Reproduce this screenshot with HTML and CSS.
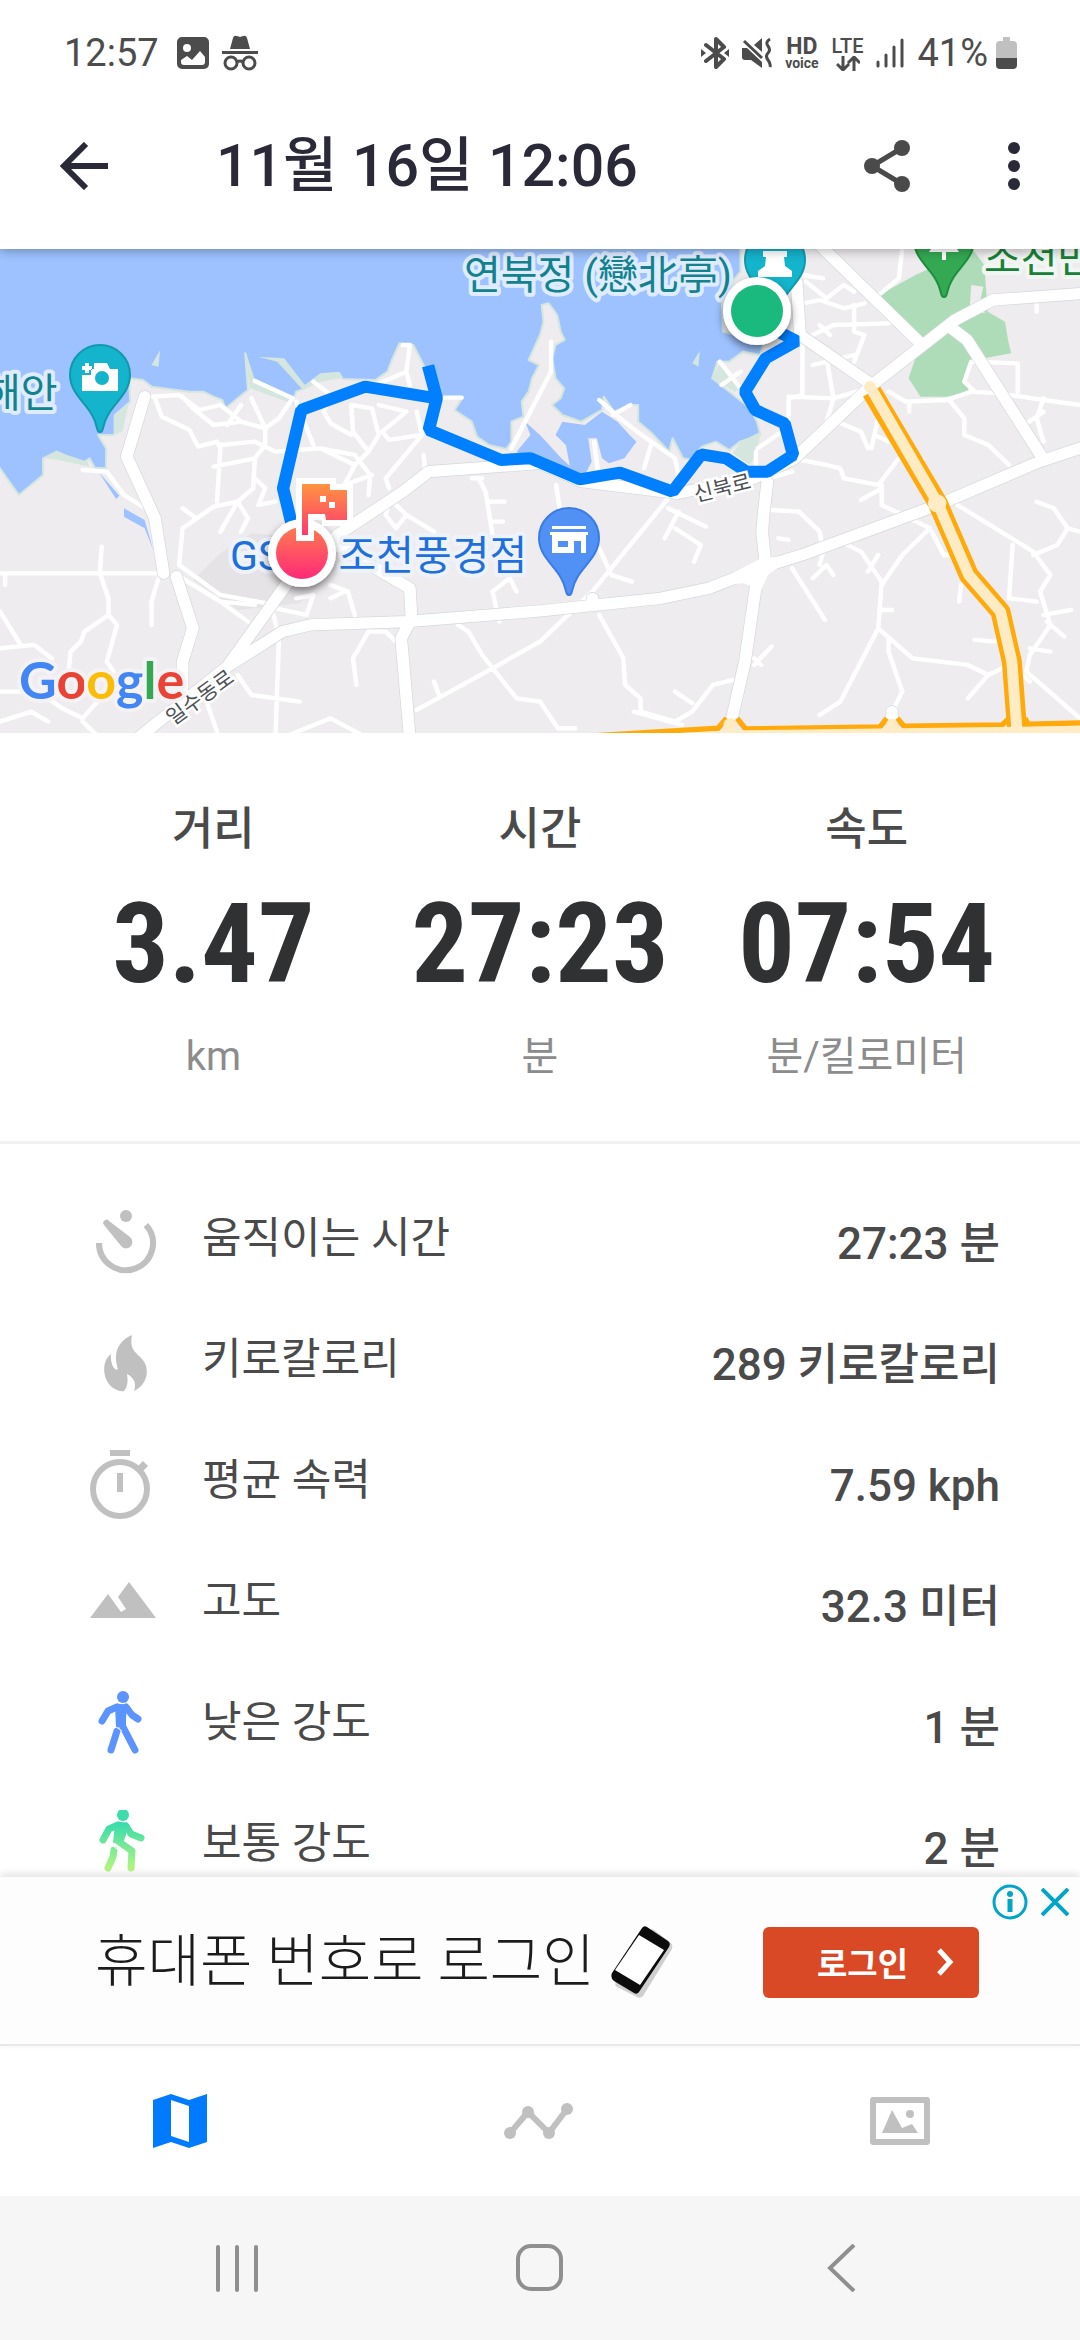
FILE: index.html
```html
<!DOCTYPE html>
<html lang="ko">
<head>
<meta charset="utf-8">
<meta name="viewport" content="width=device-width, initial-scale=1">
<title>11월 16일 12:06</title>
<link rel="stylesheet" href="styles.css">
</head>
<body>
<div class="app">
  <div class="status">
    <div class="status-group">
      <span class="status-text">12:57</span>
      <svg class="s-photo" viewBox="0 0 32 32" width="32" height="32"><path fill="#4c4c4c" fill-rule="evenodd" d="M5 0h22a5 5 0 0 1 5 5v22a5 5 0 0 1-5 5H5a5 5 0 0 1-5-5V5a5 5 0 0 1 5-5zM10 7a4 4 0 1 0 0 8 4 4 0 0 0 0-8zM4 25c0 2 1 3 3 3h18c2 0 3-1 3-3v-5l-5-6-8 9-5-4-6 4z"/></svg>
      <svg viewBox="0 0 36 36" width="36" height="36"><g fill="#4c4c4c"><path d="M8 14l3-11q1-3 4-2l3 1 3-1q3-1 4 2l3 11z"/><path d="M0 16h36v3H0z"/></g><g fill="none" stroke="#4c4c4c" stroke-width="3"><circle cx="9" cy="28" r="6"/><circle cx="27" cy="28" r="6"/><path d="M15 27q3-2 6 0"/></g></svg>
    </div>
    <div class="status-group">
      <svg viewBox="0 0 28 32" width="28" height="32"><path fill="none" stroke="#4c4c4c" stroke-width="4" stroke-linejoin="round" stroke-linecap="round" d="M5 8l18 14-8 8V2l8 8L5 24"/><path fill="#4c4c4c" d="M0 12l5 4-5 4zM28 12l-5 4 5 4z"/></svg>
      <svg class="s-mute" viewBox="0 0 30 32" width="30" height="32"><path fill="#4c4c4c" d="M0 11h5l15 14v6L9 23H3q-3 0-3-3zM20 1v14l-8-7z"/><path fill="none" stroke="#4c4c4c" stroke-width="3" d="M2 4l18 17M28 2q-5 3-2 7t0 7 0 7 2 7"/></svg>
      <span class="s-stack"><b class="s-hd">HD</b><b class="s-voice">voice</b></span>
      <span class="s-stack"><b class="s-lte">LTE</b><svg viewBox="0 0 24 15" width="24" height="15"><path fill="none" stroke="#4c4c4c" stroke-width="3" d="M7 0v13M1 8l6 6 6-6M18 15V2M12 7l6-6 6 6"/></svg></span>
      <svg class="s-bars" viewBox="0 0 28 30" width="28" height="30"><path stroke="#4c4c4c" stroke-width="3" stroke-linecap="round" d="M2 24v4M10 17v11M18 9v19M26 2v26"/></svg>
      <span class="status-text s-pct">41%</span>
      <svg viewBox="0 0 21 32" width="21" height="32"><path fill="#c0c0c0" d="M7 0h7v4h3q4 0 4 4v13H0V8q0-4 4-4h3z"/><path fill="#4c4c4c" d="M0 21h21v7q0 4-4 4H4q-4 0-4-4z"/></svg>
    </div>
  </div>

  <header class="bar">
    <button class="icon-btn" aria-label="뒤로"><svg viewBox="0 0 48 48" width="48" height="48"><path fill="none" stroke="#2a2937" stroke-width="6" d="M48 24H4M26 2L4 24l22 22"/></svg></button>
    <h1 class="title">11월 16일 12:06</h1>
    <button class="icon-btn share" aria-label="공유"><svg viewBox="0 0 46 52" width="46" height="52"><path fill="none" stroke="#4a4a4a" stroke-width="5" d="M38 8L8 26l30 18"/><g fill="#4a4a4a"><circle cx="38" cy="8" r="8"/><circle cx="8" cy="26" r="8"/><circle cx="38" cy="44" r="8"/></g></svg></button>
    <button class="icon-btn" aria-label="더보기"><svg viewBox="0 0 14 50" width="14" height="50"><g fill="#2a2937"><circle cx="7" cy="7" r="6"/><circle cx="7" cy="25" r="6"/><circle cx="7" cy="43" r="6"/></g></svg></button>
  </header>

  <svg class="map" viewBox="0 0 1080 484" preserveAspectRatio="xMidYMid slice" role="img" aria-label="지도">
    <defs>
      <linearGradient id="hot" gradientUnits="userSpaceOnUse" x1="0" y1="235" x2="0" y2="290"><stop offset="0" stop-color="#ff9440"/><stop offset="1" stop-color="#ff3074"/></linearGradient>
      <linearGradient id="ball" x1="0" y1="0" x2="0" y2="1"><stop offset="0" stop-color="#ff7a50"/><stop offset="1" stop-color="#ff2a78"/></linearGradient>
      <filter id="drop" x="-50%" y="-50%" width="200%" height="200%"><feDropShadow dx="0" dy="4" stdDeviation="4" flood-color="#000" flood-opacity=".5"/></filter>
      <path id="pin" d="M0 57C-4 57-2 50-8 40C-14 28-30 18-30 0A30 30 0 0 1 30 0C30 18 14 28 8 40C2 50 4 57 0 57Z"/>
    </defs>
    <rect width="1080" height="484" fill="#efecef"/>
    <g transform="translate(0 -4) scale(.3444 .3333)" stroke-linejoin="round">
      <path fill="#e6e3e6" d="M640 925l90-60 250 20 20 60-130 130-180 20-130-90z"/>
      <path fill="#9dc2ff" stroke="#d4e6dd" stroke-width="6" d="M-20 -20V640L20 700 55 750 125 690 125 640 165 620 240 655 260 640 275 668 308 670 308 610 285 570 330 570 350 545 335 510 378 470 375 400 415 405 440 425 550 440 590 440 620 455 645 465 655 490 690 460 720 435 712 325 735 400 850 470 860 440 885 430 930 395 985 385 995 402 1090 405 1125 380 1140 340 1160 295 1200 300 1225 350 1250 400 1285 460 1345 455 1320 495 1370 530 1385 575 1420 600 1470 612 1485 590 1485 530 1520 515 1515 470 1535 440 1545 400 1565 360 1535 345 1568 270 1578 230 1573 180 1593 175 1618 210 1628 260 1640 285 1613 300 1603 340 1613 400 1638 430 1628 460 1603 480 1633 510 1688 530 1748 495 1753 455 1783 500 1828 480 1853 480 1853 530 1888 560 1943 620 1953 580 1983 640 2008 645 2038 605 2078 590 2118 615 2148 590 2208 570 2198 530 2178 490 2118 440 2068 400 2083 350 2118 350 2158 320 2208 330 2218 290 2100 260 2095 150 2150 80V-20Z"/>
      <path fill="#9dc2ff" d="M1525 530L1568 570 1630 640 1700 705 1540 645 1500 620 1540 570ZM1613 570L1633 530 1698 540 1748 500 1793 530 1828 570 1848 590 1813 640 1768 655 1748 640 1733 580 1708 580 1718 650 1698 690 1658 680 1643 600ZM287 682l60 70-10 10zM360 790l60 35 25 90-25-65-60-35z"/>
      <g fill="#d4e6dd"><path d="M712 325l28 80 110 55 10 20-135-50zM750 335l75 5 60 80 45-35 55-5 5 20-60 10-50 25-75-85zM130 640l35-20 90 30 5 15-90-20zM440 360l25-45-5 50zM2150 590l58-30-10 60-20 40-50-35zM2068 400l25-50 60 80-20 10zM330 570l0-60 45-40-20 90zM2010 355l22-38-4 48z"/></g>
      <path fill="#aedcb8" d="M2553 150L2658 90 2823 12 2858 60 2868 200 2918 230 2928 290 2936 325 2858 340 2818 350 2803 400 2813 440 2748 455 2673 455 2638 400 2658 340 2690 310 2658 290 2618 230Z"/>
      <path fill="#efecef" d="M2820 120l35 5-10 50 15 30-45-5z"/>
      <g fill="none" stroke="#fff" stroke-width="13" stroke-linecap="round">
        <path d="M440 455L520 450 580 495 640 480 700 530 770 550 810 520 850 460 740 408M450 460L470 515 550 555 575 605 630 590 640 610 630 770M530 455L560 490 620 540 700 530M700 480L660 540M730 460L770 550 770 600 740 640 620 665M640 600L740 590 800 620 930 610 1030 660 1070 620 1100 570 1080 490 1020 480 1025 560 1070 620M910 410L960 450 940 500 960 535 1020 570M860 470L910 600M1090 420L1180 380 1190 300 1170 300M1180 380L1190 420M1100 480L1180 500 1110 560 1130 585 1225 570M1210 500L1225 570 1120 700 1130 730M1230 630L1235 680M1030 660L1000 720 1080 690M930 610L1030 630 1075 690 1070 750"/>
        <path d="M740 640L735 730 690 770 620 785 530 850 520 960 640 1050 800 1080M690 770L720 820 700 860M530 790L570 820M690 770L640 860M740 700L770 730 750 780 800 770M1290 458L1340 458M1485 610L1600 380 1600 290M240 675L310 680 360 750 430 795M0 985L460 985M15 985L15 1020M295 905L290 985 315 1060 315 1110 245 1160 235 1190 205 1220 200 1270 240 1300M315 1110L340 1140 310 1250 330 1280M460 1000L440 1070 440 1140M0 1210L100 1200 150 1240M0 1100L60 1200M0 1340L110 1340 180 1390M0 1430L90 1400 140 1430M240 1430L280 1470M180 1390L240 1420 300 1350M530 1000L640 1070 720 1130M640 1070L740 1080M790 1090L810 1180 800 1470M690 1290L730 1350 870 1370M600 1370L630 1460M800 1090L890 1110 910 1050 860 1060M960 1020L1010 1040 1030 1110M960 1060L1000 1040M1070 1160L1025 1240 1035 1320M1070 1160L1120 1160 1150 1190M1330 1140L1360 1160 1400 1230 1500 1360 1568 1370M1210 1395L1430 1270 1568 1190M1260 1310L1275 1350M840 1470L960 1420 1050 1470"/>
        <path d="M1390 700L1410 740 1430 870 1460 930 1480 1000 1430 1040 1450 1130M1370 700L1400 700M1420 770L1465 770M1425 830L1460 830M1480 1000L1500 1040M1130 770L1120 810 1150 850 1180 810 1140 770M1180 810L1260 860M1615 720L1625 790M1740 465L1800 520 1850 560 1960 640 1970 690M1780 510L1830 480M1890 600L1870 670M1725 590L1735 670M1940 760L1720 1040 1568 1190M1740 1110L1810 1240 1815 1320 1860 1360 1860 1400 1960 1430 2010 1400 2070 1320 2130 1305M1960 1340L2010 1375M1840 1400L1980 1440M1940 790L2050 845M1970 800L1930 880M1960 850L2035 900 2015 950M1740 910L1775 990 1835 1010M1568 1370L1620 1450 1670 1450"/>
        <path d="M2090 350L2150 430M2095 420L2150 380M2310 180L2380 165 2450 190 2510 175M2390 100L2330 90M2340 110L2400 160 2450 120 2480 140M2340 280L2420 240 2580 235M2380 240L2410 270M2480 180L2480 260 2510 270 2480 350M2360 360L2480 330M2620 10L2610 100 2540 160M2330 290L2330 450 2290 460 2290 530M2290 455L2420 460 2520 430M2400 340L2420 460 2400 530M2430 530L2500 560 2520 610M2550 520L2530 610M2540 570L2580 590M2580 440L2630 470 2750 465 2820 440 2900 445 3030 465 3136 480M2640 470L2640 500M2760 470L2800 520 2800 570 2870 600 2930 660M3030 460L3010 520 3030 590M2960 550L3030 500M2820 350L2955 355 2955 440M2820 350L2800 410 2830 440M3010 180L3010 200"/>
        <path d="M2200 610L2270 560M2195 660L2195 620M2300 640L2400 660 2440 670 2450 700 2550 720 2610 640M2560 720L2560 780 2700 850M2500 765L2560 730M2240 795L2320 800 2380 860 2390 920 2380 960M2260 880L2290 885M2300 970L2395 1125M2360 1000L2400 960 2420 990M2440 890L2500 920 2560 1010 2550 1150 2650 1240 2810 1260 2870 1290 2910 1270M2550 930L2520 980M2700 850L2620 930 2560 1020M2700 850L2740 930 2780 930M2550 1150L2440 1370 2380 1410M2580 1180L2580 1220 2620 1340 2590 1400M2560 1095L2590 1095M2870 1290L2810 1360M2780 780L3000 920 3050 990 3020 1040 3050 1140 2990 1230 2980 1280 3136 1420M3000 930L3070 900 3100 850 3060 790 3010 770M3100 850L3136 860M2940 900L2930 1060 3010 1070M2790 1020L2785 1070M3030 1110L3110 1095M3040 1130L3090 1175M2830 1185L2890 1190M2990 1210L3050 1220M2990 1310L2970 1290M2190 1260L2240 1205M2230 700L2300 680M2620 640L2680 645M2210 1260L2190 1240"/>
      </g>
      <g fill="none" stroke-linecap="round">
        <g stroke="#d3d8dc" stroke-width="38"><path d="M420 455L368 635 450 820 475 985M512 995L560 1150 530 1250 530 1330M400 1480L660 1265 830 1020 980 870 1170 740 1245 680 1568 655 1690 710 1968 745 2188 700 2308 640 2526 425 2773 225 2883 165 3150 145M660 1265L820 1160 900 1140 1180 1130 1568 1098 1918 1060 2058 1030 2218 965 2328 930 2723 780 3018 650 3150 605M960 890L1190 1030 1195 1120 1165 1180 1190 1480M2228 710L2218 800 2213 860 2223 960 2198 1000 2163 1250 2123 1430M2380 0L2668 290M2313 110L2323 270 2526 415M2763 250L2808 285 3028 640M1720 1060L1720 1080M2590 1400L2590 1440"/></g>
        <g stroke="#fff" stroke-width="34"><path d="M420 455L368 635 450 820 475 985M512 995L560 1150 530 1250 530 1330M400 1480L660 1265 830 1020 980 870 1170 740 1245 680 1568 655 1690 710 1968 745 2188 700 2308 640 2526 425 2773 225 2883 165 3150 145M660 1265L820 1160 900 1140 1180 1130 1568 1098 1918 1060 2058 1030 2218 965 2328 930 2723 780 3018 650 3150 605M960 890L1190 1030 1195 1120 1165 1180 1190 1480M2228 710L2218 800 2213 860 2223 960 2198 1000 2163 1250 2123 1430M2380 0L2668 290M2313 110L2323 270 2526 415M2763 250L2808 285 3028 640M1720 1060L1720 1080M2590 1400L2590 1440"/></g>
        <path fill="#fff" d="M2050 1025l160-85 100-10-80 60-20 45-50-20z"/>
      </g>
      <g fill="none">
        <path stroke="#ffa90a" stroke-width="58" d="M2531 440L2723 775 2813 990 2905 1100 2938 1250 2953 1450"/>
        <path stroke="#ffa90a" stroke-width="16" d="M1730 1472L2085 1450 2110 1420M2140 1420L2165 1452 2555 1446 2575 1420M2605 1420L2625 1444 2910 1440 2930 1420M2976 1420L2985 1438 3136 1434"/>
        <path stroke="#ffecc4" stroke-width="32" d="M2526 425L2723 775 2813 990 2905 1100 2938 1250 2953 1460M1900 1484L2100 1473 3136 1459"/>
      </g>
      <g fill="#ffecc4"><circle cx="2526" cy="425" r="17"/><circle cx="2721" cy="775" r="27"/><circle cx="2120" cy="1440" r="20"/><circle cx="2590" cy="1440" r="18"/></g>
      <path fill="none" stroke="#0080ff" stroke-width="36" stroke-linejoin="bevel" d="M850 850L822 730 875 495 1060 425 1268 460M1243 362L1268 460 1245 555 1455 645 1540 640 1683 703 1800 683 1953 740 2036 628 2108 640 2168 680 2228 680 2303 630 2278 535 2193 495 2163 440 2223 340 2313 288 2240 250"/>
    </g>

    <g class="poi">
      <text x="464" y="40" class="teal">연북정 (戀北亭)</text>
      <text x="-16" y="158" class="teal">해안</text>
      <text x="230" y="321" class="blue">GS25 조천풍경점</text>
      <text x="984" y="23" class="green">조천만세동산</text>
    </g>
    <g class="road-name">
      <text x="0" y="0" transform="translate(696 253) rotate(-14)">신북로</text>
      <text x="0" y="0" transform="translate(173 477) rotate(-36)">일수동로</text>
    </g>
    <g transform="translate(100 126)"><use href="#pin" fill="#14b4cc" stroke="#1398ab" stroke-width="2"/><path fill="#fff" fill-rule="evenodd" d="M-6-12H7l3 6h8v22h-36V0h9v-6h3zM2-4a7 7 0 1 0 0 14 7 7 0 0 0 0-14zM-15-12h4v3h3v4h-3v3h-4v-3h-3v-4h3z"/></g>
    <g transform="translate(569 289)"><use href="#pin" fill="#5191f5" stroke="#3b7ce4" stroke-width="2"/><path fill="#fff" fill-rule="evenodd" d="M-17-12h34v3h-34zM-19-6h38v3h-2v18h-5V3H5v12h-22V-3h-2zM-11 3v6h10V3z"/></g>
    <g transform="translate(775 11)"><use href="#pin" fill="#14b4cc" stroke="#1398ab" stroke-width="2"/><path fill="#fff" d="M-12-9h24v6h-3l1 9 7 5v6h-34v-6l7-5 1-9h-3z"/></g>
    <g transform="translate(944 -9)"><use href="#pin" fill="#34a853" stroke="#1e8e3e" stroke-width="2"/><path fill="#fff" d="M0-12l15 24H2v8h-4v-8h-13z"/></g>
    <g filter="url(#drop)"><circle cx="757" cy="62" r="34" fill="#fff"/></g><circle cx="757" cy="62" r="26" fill="#1ab97e"/>
    <g filter="url(#drop)"><circle cx="302" cy="304" r="34" fill="#fff"/></g><circle cx="302" cy="304" r="26" fill="url(#ball)"/>
    <path fill="#fff" d="M296 229H336V235H353V277H322V271H314V292H296Z"/>
    <path fill="url(#hot)" fill-rule="evenodd" d="M302 235H330V241H347V271H326L325 265H308V286H302ZM320 247v6h6v-6zM329 253v6h6v-6z"/>
    <text class="logo" x="19" y="450"><tspan fill="#4285f4">G</tspan><tspan fill="#ea4335">o</tspan><tspan fill="#fbbc05">o</tspan><tspan fill="#4285f4">g</tspan><tspan fill="#34a853">l</tspan><tspan fill="#ea4335">e</tspan></text>
  </svg>

  <main class="content">
    <section class="stats">
      <div class="stat"><span class="stat-name">거리</span><strong class="stat-value">3.47</strong><span class="stat-unit">km</span></div>
      <div class="stat"><span class="stat-name">시간</span><strong class="stat-value">27:23</strong><span class="stat-unit">분</span></div>
      <div class="stat"><span class="stat-name">속도</span><strong class="stat-value">07:54</strong><span class="stat-unit">분/킬로미터</span></div>
    </section>
    <dl class="list">
      <div class="row"><svg viewBox="0 0 72 72" width="72" height="72"><path fill="none" stroke="#c0c0c0" stroke-width="6" d="M9 38a27 27 0 1 0 47-18"/><path fill="#c0c0c0" d="M14 20a3 3 0 0 1 5-4l21 16a6 6 0 0 1-8 10z"/><circle cx="36" cy="11" r="6" fill="#c0c0c0"/></svg><dt>움직이는 시간</dt><dd>27:23 분</dd></div>
      <div class="row"><svg viewBox="0 0 72 72" width="72" height="72"><path fill="#c0c0c0" d="M42 9C32 13 25 22 26 34Q27 41 28 43C24 46 20 36 21 28C10 36 13 57 25 63Q30 66 34 65Q39 60 37 48Q48 54 44 65C57 59 61 43 52 33C46 26 39 24 42 9Z"/></svg><dt>키로칼로리</dt><dd>289 키로칼로리</dd></div>
      <div class="row"><svg viewBox="0 0 72 72" width="72" height="72"><circle cx="30" cy="42" r="27" fill="none" stroke="#c0c0c0" stroke-width="6"/><path fill="#c0c0c0" d="M20 3h20v6H20zM27 26h6v19h-6zM48 19l5-5 5 5-6 6z"/></svg><dt>평균 속력</dt><dd>7.59 kph</dd></div>
      <div class="row"><svg viewBox="0 0 72 72" width="72" height="72"><path fill="#c0c0c0" d="M0 50l18-24 13 18 5-3-8-12 11-15 27 36z"/></svg><dt>고도</dt><dd>32.3 미터</dd></div>
      <div class="row"><svg viewBox="0 0 72 72" width="72" height="72"><g fill="#5b93ff" stroke="#5b93ff" stroke-linecap="round" stroke-linejoin="round"><circle cx="33" cy="8" r="6" stroke="none"/><path stroke="none" d="M25 16q6-2 12 0l-1 14v7l-10 2z"/><path fill="none" stroke-width="7" d="M27 18l-9 4-6 10M36 18l6 8 6 4"/><path fill="none" stroke-width="7" d="M31 34l14 27M27 42l-6 19"/></g><path stroke="#fff" stroke-width="1" d="M23 36l9 6"/></svg><dt>낮은 강도</dt><dd>1 분</dd></div>
      <div class="row"><svg viewBox="0 0 72 72" width="72" height="72"><defs><linearGradient id="mid" gradientUnits="userSpaceOnUse" x1="0" y1="2" x2="0" y2="64"><stop offset=".2" stop-color="#3cdcab"/><stop offset="1" stop-color="#c0f97a"/></linearGradient></defs><g fill="url(#mid)" stroke="url(#mid)" stroke-linecap="round" stroke-linejoin="round"><circle cx="33" cy="5" r="6" stroke="none"/><path stroke="none" d="M25 13q6-2 12 0l-1 12-3 8-10 0z"/><path fill="none" stroke-width="7" d="M28 15l-9 4-6 11M36 16l5 8 10 4M28 31l14 10-1 17"/><path fill="none" stroke-width="7" d="M24 40l-1 7-5 11"/></g><path stroke="#fff" stroke-width="1" d="M20 34l10 7"/></svg><dt>보통 강도</dt><dd>2 분</dd></div>
    </dl>
  </main>

  <aside class="ad">
    <span class="ad-text">휴대폰 번호로 로그인</span>
    <svg class="ad-phone" viewBox="0 0 62 74" width="62" height="74"><path fill="#cfcfcf" d="M5 56L38 6q2-3 5-1l17 13q2 2 1 6L32 71q-3 3-6 1L6 62q-3-2-1-6z"/><path fill="#0c0c0c" d="M1 48L31 3q2-3 5-1l21 14q3 2 1 6L28 67q-2 3-5 1L3 56q-4-3-2-8z"/><path fill="#fff" d="M4 45L28 10l25 15-24 35z"/></svg>
    <button class="ad-btn">로그인<svg viewBox="0 0 18 30" width="18" height="30"><path fill="none" stroke="#fff" stroke-width="5" d="M3 3l11 12L3 27"/></svg></button>
    <div class="ad-choices">
      <a href="#info" aria-label="광고 정보"><svg viewBox="0 0 36 36" width="36" height="36"><circle cx="18" cy="18" r="16" fill="none" stroke="#00a5c8" stroke-width="3"/><circle cx="18" cy="10" r="3" fill="#00a5c8"/><path stroke="#00a5c8" stroke-width="5" d="M18 15v13"/></svg></a>
      <button class="icon-btn" aria-label="광고 닫기"><svg viewBox="0 0 28 28" width="28" height="28"><path stroke="#00a5c8" stroke-width="4" d="M1 1l26 26M27 1L1 27"/></svg></button>
    </div>
  </aside>

  <nav class="tabs">
    <button class="icon-btn" aria-label="지도"><svg viewBox="0 0 72 72" width="72" height="72"><path fill="#007aff" fill-rule="evenodd" d="M9 15L27 9l18 6 18-6V57L45 63 27 57 9 63ZM27 15V51L45 57V21Z"/></svg></button>
    <button class="icon-btn" aria-label="그래프"><svg viewBox="0 0 72 72" width="72" height="72"><path fill="none" stroke="#c0c0c0" stroke-width="6" d="M6 48L24 27 45 48 63 24"/><g fill="#c0c0c0"><circle cx="6" cy="48" r="6"/><circle cx="24" cy="27" r="6"/><circle cx="45" cy="48" r="6"/><circle cx="63" cy="24" r="6"/></g></svg></button>
    <button class="icon-btn" aria-label="사진"><svg viewBox="0 0 72 72" width="72" height="72"><path fill="#c0c0c0" fill-rule="evenodd" d="M8 12h56l2 2v44l-2 2H8l-2-2V14zM12 18v36h48V18zM18 48L28 25 38 43 48 39 54 48Z"/><circle cx="46" cy="29" r="4" fill="#c0c0c0"/></svg></button>
  </nav>

  <nav class="sysnav">
    <button class="icon-btn" aria-label="최근 앱"><svg viewBox="0 0 48 48" width="48" height="48"><path stroke="#8f8f8f" stroke-width="4" stroke-linecap="round" d="M4 3v43M23 3v43M42 3v43"/></svg></button>
    <button class="icon-btn" aria-label="홈"><svg viewBox="0 0 48 48" width="48" height="48"><rect x="2" y="2" width="43" height="43" rx="13" fill="none" stroke="#8f8f8f" stroke-width="4"/></svg></button>
    <button class="icon-btn" aria-label="뒤로 가기"><svg viewBox="0 0 48 48" width="48" height="48"><path fill="none" stroke="#8f8f8f" stroke-width="4" d="M36 1L12 24l24 23"/></svg></button>
  </nav>
</div>
</body>
</html>
```
FILE: styles.css
```css
* { box-sizing: border-box; }

body {
  margin: 0;
  background: #fff;
  color: #4a4a4a;
  font-family: Roboto, "Noto Sans CJK KR", sans-serif;
}

svg { display: block; flex: none; }

button {
  border: 0;
  padding: 0;
  background: none;
  font: inherit;
  color: inherit;
}

.app {
  display: flex;
  flex-direction: column;
  height: 100vh;
}

.icon-btn {
  display: flex;
  align-items: center;
  justify-content: center;
}

/* system status bar */
.status {
  position: relative;
  z-index: 2;
  display: flex;
  align-items: center;
  justify-content: space-between;
  flex: none;
  height: 106px;
  padding: 0 63px 0 64px;
  background: #fff;
  color: #4c4c4c;
}

.status-group { display: flex; align-items: center; gap: 13px; }
.status-text { font-size: 38px; line-height: 40px; }
.s-photo { margin-left: 5px; }
.s-pct { margin-right: -5px; }
.s-stack { display: flex; flex-direction: column; align-items: center; }
.s-hd { font-size: 23px; line-height: 20px; }
.s-voice { font-size: 14px; line-height: 12px; }
.s-lte { font-size: 20px; line-height: 20px; font-weight: 500; }

/* app bar */
.bar {
  position: relative;
  z-index: 1;
  display: flex;
  align-items: center;
  flex: none;
  height: 143px;
  padding: 0 59px 24px 60px;
  background: #fff;
  box-shadow: 0 2px 10px rgba(0, 0, 0, .3);
}

.title {
  flex: 1;
  margin: 0 0 0 108px;
  font-size: 59px;
  line-height: 72px;
  font-weight: 500;
  color: #2a2937;
}

.share { margin-right: 97px; }

/* map */
.map { width: 100%; aspect-ratio: 1080 / 484; }
.poi { font-size: 40px; stroke: #eef3fb; stroke-width: 8px; stroke-linejoin: round; paint-order: stroke; }
.poi .teal { fill: #12828f; stroke: #dfecff; }
.poi .blue { font-size: 41px; fill: #1f70dd; }
.poi .green { fill: #188038; stroke: #f2f6f2; }
.road-name { font-size: 21px; fill: #4d5156; stroke: #fff; stroke-width: 5px; paint-order: stroke; }
.logo { font-family: Lato, sans-serif; font-size: 52px; font-weight: 700; stroke: #f4f2f4; stroke-width: 8px; stroke-linejoin: round; paint-order: stroke; }

/* summary and details */
.content {
  flex: 1;
  min-height: 0;
  overflow: hidden;
}

.stats {
  display: grid;
  grid-template-columns: repeat(3, 1fr);
  padding: 66px 50px 54px;
  border-bottom: 3px solid #f1f1f1;
}

.stat { display: flex; flex-direction: column; align-items: center; }
.stat-name { font-size: 45px; line-height: 62px; font-weight: 500; }
.stat-value { font-family: "Roboto Condensed", Roboto, sans-serif; font-size: 112px; line-height: 166px; color: #303132; }
.stat-unit { font-size: 40px; line-height: 60px; color: #8c8c8c; }

.list { margin: 0; padding: 36px 80px 0 90px; }
.row { display: flex; align-items: center; height: 121px; }
.row dt { flex: 1; margin: 0 0 6px 40px; font-size: 43px; line-height: 60px; }
.row dd { margin: 6px 0 0; font-size: 44px; line-height: 60px; font-weight: 500; }

/* banner */
.ad {
  position: relative;
  display: flex;
  align-items: center;
  flex: none;
  height: 169px;
  padding: 3px 101px 0 95px;
  background: #fdfdfd;
  border-bottom: 2px solid #e8e8e8;
  box-shadow: 0 -3px 8px rgba(0, 0, 0, .12);
}

.ad-text { font-size: 57px; line-height: 72px; font-weight: 300; color: #1c1c1c; }
.ad-phone { margin-left: 16px; }

.ad-btn {
  display: flex;
  align-items: center;
  justify-content: flex-end;
  gap: 28px;
  width: 216px;
  height: 71px;
  margin-left: auto;
  padding-right: 25px;
  border-radius: 6px;
  background: #da4926;
  color: #fff;
  font-size: 33px;
  font-weight: 700;
}

.ad-choices {
  position: absolute;
  top: 7px;
  right: 11px;
  display: flex;
  align-items: center;
  gap: 13px;
}

/* bottom navigation */
.tabs {
  display: grid;
  grid-template-columns: repeat(3, 1fr);
  flex: none;
  height: 150px;
  background: #fff;
}

.sysnav {
  display: grid;
  grid-template-columns: repeat(3, 1fr);
  flex: none;
  height: 144px;
  padding: 0 87px;
  background: #f6f6f6;
}
```
